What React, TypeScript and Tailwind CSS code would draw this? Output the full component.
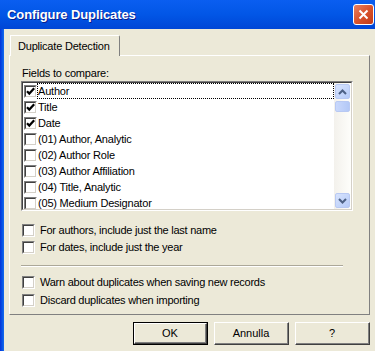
import React from "react";

const font = { fontFamily: '"Liberation Sans", Arial, sans-serif' };

const fields = [
  { label: "Author", checked: true },
  { label: "Title", checked: true },
  { label: "Date", checked: true },
  { label: "(01) Author, Analytic", checked: false },
  { label: "(02) Author Role", checked: false },
  { label: "(03) Author Affiliation", checked: false },
  { label: "(04) Title, Analytic", checked: false },
  { label: "(05) Medium Designator", checked: false },
];

function Box({ checked }: { checked?: boolean }) {
  return (
    <div className="w-[13px] h-[13px] shrink-0 bg-white border-t border-l border-[#808080] border-r border-b border-r-white border-b-white">
      <div className="w-full h-full border-t border-l border-[#404040] border-r border-b border-r-[#d4d0c8] border-b-[#d4d0c8] flex items-center justify-center">
        {checked && (
          <svg width="9" height="9" viewBox="0 0 9 9">
            <path d="M1 4.2 L3.3 6.6 L8.2 1.2" stroke="#000" strokeWidth="2.2" fill="none" />
          </svg>
        )}
      </div>
    </div>
  );
}

function Chevron({ up }: { up?: boolean }) {
  return (
    <svg width="9" height="6" viewBox="0 0 9 6">
      <path
        d={up ? "M1 5 L4.5 1.5 L8 5" : "M1 1 L4.5 4.5 L8 1"}
        stroke="#4d6185"
        strokeWidth="2"
        fill="none"
      />
    </svg>
  );
}

function Option({ label }: { label: string }) {
  return (
    <div className="flex items-center h-[17px]">
      <Box />
      <span className="ml-[5px] text-[11px] tracking-[-0.25px] text-black">{label}</span>
    </div>
  );
}

function Button({ label, primary }: { label: string; primary?: boolean }) {
  return (
    <div className={`w-[75px] h-[23px] ${primary ? "border border-black" : ""}`}>
      <div className="w-full h-full border-t border-l border-white border-r border-b border-r-[#404040] border-b-[#404040]">
        <div className="w-full h-full border-r border-b border-[#808080] flex items-center justify-center text-[11px] text-black bg-[#ece9d8]">
          {label}
        </div>
      </div>
    </div>
  );
}

export default function App() {
  return (
    <div className="w-[375px] h-[351px] overflow-hidden bg-[#ece9d8] flex flex-col" style={font}>
      {/* Title bar */}
      <div className="h-[29px] shrink-0 flex items-center justify-between pl-[7px] pr-[1px] bg-gradient-to-b from-[#0a5ef0] via-[#0256e6] to-[#0046d6]">
        <span className="text-white font-bold text-[13px] tracking-[-0.1px] [text-shadow:1px_1px_0_#0a1e8c]">
          Configure Duplicates
        </span>
        <div className="w-[21px] h-[21px] rounded-[3px] border border-white bg-gradient-to-br from-[#e9805f] via-[#d9532c] to-[#c23a17] flex items-center justify-center">
          <svg width="11" height="11" viewBox="0 0 11 11">
            <path d="M1.5 1.5 L9.5 9.5 M9.5 1.5 L1.5 9.5" stroke="#fff" strokeWidth="2" />
          </svg>
        </div>
      </div>

      <div className="flex flex-1">
        {/* left frame */}
        <div className="w-[4px] bg-gradient-to-r from-[#0831d9] to-[#166aee]" />

        <div className="flex-1 flex flex-col pl-[5px] pt-[6px]">
          {/* Tab */}
          <div className="relative z-10 -mb-[1px] w-[110px] h-[21px] ml-[1px] bg-[#ece9d8] border-t border-l border-white border-r border-r-[#808080] rounded-tr-[2px] flex items-center pl-[7px] text-[11px] tracking-[-0.2px] text-black">
            Duplicate Detection
          </div>

          {/* Panel */}
          <div className="w-[361px] h-[260px] border-t border-l border-white border-r border-b border-r-[#808080] border-b-[#808080] flex flex-col pl-[12px] pt-[11px]">
            <div className="text-[11px] tracking-[-0.2px] text-black leading-[13px]">Fields to compare:</div>

            {/* Listbox */}
            <div className="mt-[1px] -ml-[1px] w-[332px] h-[130px] border-t border-l border-[#808080] border-r border-b border-r-white border-b-white">
              <div className="w-full h-full border-t border-l border-[#404040] border-r border-b border-r-[#d4d0c8] border-b-[#d4d0c8] bg-white flex overflow-hidden">
                <div className="flex-1 flex flex-col pl-[1px] overflow-hidden">
                  {fields.map((f, i) => (
                    <div key={f.label} className="h-[16px] shrink-0 flex items-center">
                      <Box checked={f.checked} />
                      <div
                        className={`flex-1 h-[16px] flex items-center text-[11px] tracking-[-0.2px] text-black ${
                          i === 0 ? "border border-dotted border-black" : "border border-transparent"
                        }`}
                      >
                        <span className="leading-[12px]">{f.label}</span>
                      </div>
                    </div>
                  ))}
                </div>

                {/* Scrollbar */}
                <div className="w-[17px] h-full bg-gradient-to-r from-[#f3f1ec] to-[#fefefb] flex flex-col justify-between py-[1px] px-[1px]">
                  <div className="flex flex-col gap-[2px]">
                    <div className="h-[15px] rounded-[2px] border border-[#b8c9f3] bg-gradient-to-br from-[#d7e3fd] to-[#b6cbf8] flex items-center justify-center">
                      <Chevron up />
                    </div>
                    <div className="h-[11px] rounded-[2px] border border-[#b8c9f3] bg-gradient-to-r from-[#c9d8fc] to-[#b3c8f6]" />
                  </div>
                  <div className="h-[15px] rounded-[2px] border border-[#b8c9f3] bg-gradient-to-br from-[#d7e3fd] to-[#b6cbf8] flex items-center justify-center">
                    <Chevron />
                  </div>
                </div>
              </div>
            </div>

            {/* Options */}
            <div className="mt-[11px] flex flex-col">
              <Option label="For authors, include just the last name" />
              <Option label="For dates, include just the year" />
            </div>
            <div className="mt-[9px] -ml-[1px] w-[322px] border-t border-[#aca899] border-b border-b-white" />
            <div className="mt-[7px] flex flex-col gap-[1px]">
              <Option label="Warn about duplicates when saving new records" />
              <Option label="Discard duplicates when importing" />
            </div>
          </div>

          {/* Buttons */}
          <div className="mt-[7px] w-[361px] flex justify-end gap-[6px]">
            <Button label="OK" primary />
            <Button label="Annulla" />
            <Button label="?" />
          </div>
        </div>
      </div>
    </div>
  );
}
